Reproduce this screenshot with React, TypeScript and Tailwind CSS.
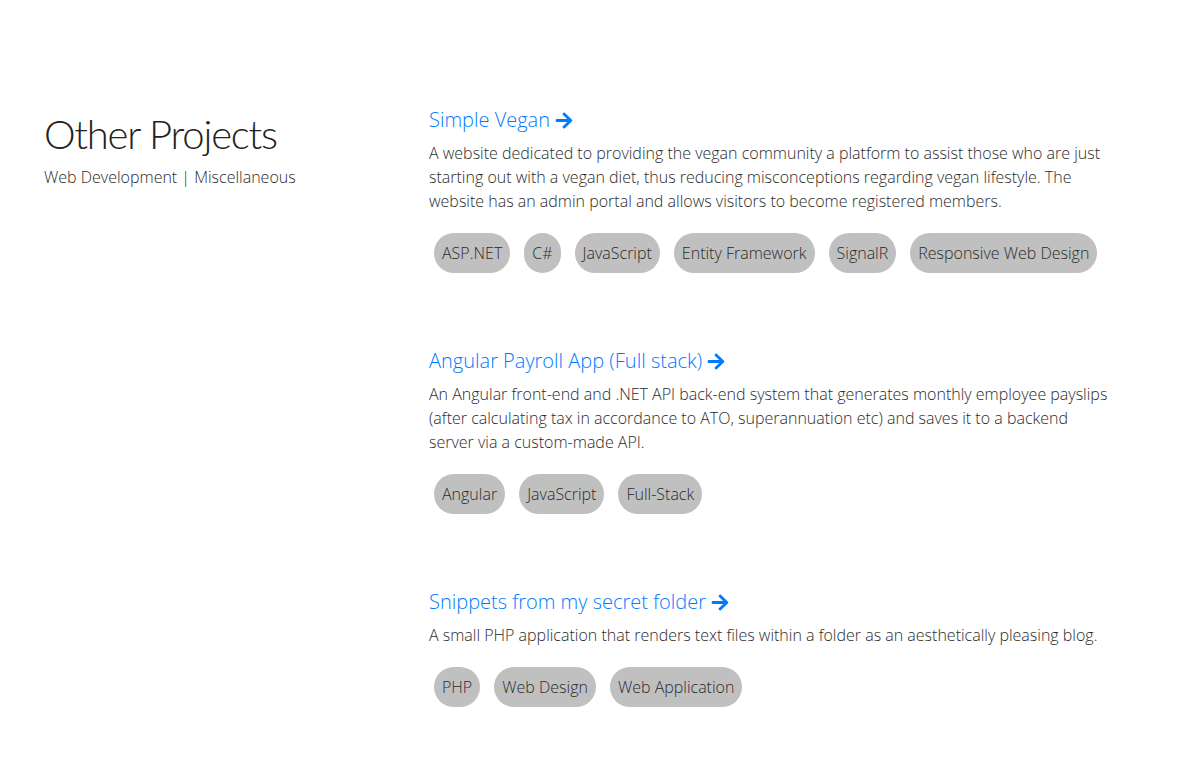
import React from 'react';

type Project = {
  title: string;
  description: string;
  tags: string[];
};

const projects: Project[] = [
  {
    title: 'Simple Vegan',
    description:
      'A website dedicated to providing the vegan community a platform to assist those who are just starting out with a vegan diet, thus reducing misconceptions regarding vegan lifestyle. The website has an admin portal and allows visitors to become registered members.',
    tags: ['ASP.NET', 'C#', 'JavaScript', 'Entity Framework', 'SignalR', 'Responsive Web Design'],
  },
  {
    title: 'Angular Payroll App (Full stack)',
    description:
      'An Angular front-end and .NET API back-end system that generates monthly employee payslips (after calculating tax in accordance to ATO, superannuation etc) and saves it to a backend server via a custom-made API.',
    tags: ['Angular', 'JavaScript', 'Full-Stack'],
  },
  {
    title: 'Snippets from my secret folder',
    description: 'A small PHP application that renders text files within a folder as an aesthetically pleasing blog.',
    tags: ['PHP', 'Web Design', 'Web Application'],
  },
];

const Arrow = () => (
  <svg viewBox="0 0 448 512" className="inline-block h-[19px] w-[18px] align-[-3px] ml-[5px] fill-current">
    <path d="M190.5 66.9l22.2-22.2c9.4-9.4 24.6-9.4 33.9 0L441 239c9.4 9.4 9.4 24.6 0 33.9L246.6 467.3c-9.4 9.4-24.6 9.4-33.9 0l-22.2-22.2c-9.5-9.5-9.3-25 .4-34.3L311.4 296H24c-13.3 0-24-10.7-24-24v-32c0-13.3 10.7-24 24-24h287.4L190.9 101.2c-9.8-9.3-10-24.8-.4-34.3z" />
  </svg>
);

const ProjectItem = ({ project }: { project: Project }) => (
  <div className="mb-[73px]">
    <a href="#" className="block text-[20px] leading-[30px] text-[#007bff]">
      {project.title}
      <Arrow />
    </a>
    <p className="mt-[6px] text-[16px] leading-[24px] text-[#2b2b2b]">{project.description}</p>
    <div className="mt-[20px] flex flex-wrap gap-[14px] pl-[5px]">
      {project.tags.map((tag) => (
        <span key={tag} className="h-[40px] flex items-center rounded-full bg-[#c0c0c0] px-[8px] text-[16px] text-[#2b2b2b]">
          {tag}
        </span>
      ))}
    </div>
  </div>
);

export default function App() {
  return (
    <div className="min-h-screen bg-white pt-[105px] pl-[44px] font-['Open_Sans',sans-serif] font-light">
      <div className="flex">
        <div className="w-[385px] shrink-0">
          <h2 className="font-['Lato',sans-serif] font-light text-[40px] leading-[58px] text-[#222] tracking-[-1.2px]">
            Other Projects
          </h2>
          <p className="mt-[2px] text-[16px] leading-[24px] text-[#2b2b2b]">Web Development | Miscellaneous</p>
        </div>
        <div className="w-[682px]">
          {projects.map((p) => (
            <ProjectItem key={p.title} project={p} />
          ))}
        </div>
      </div>
    </div>
  );
}
